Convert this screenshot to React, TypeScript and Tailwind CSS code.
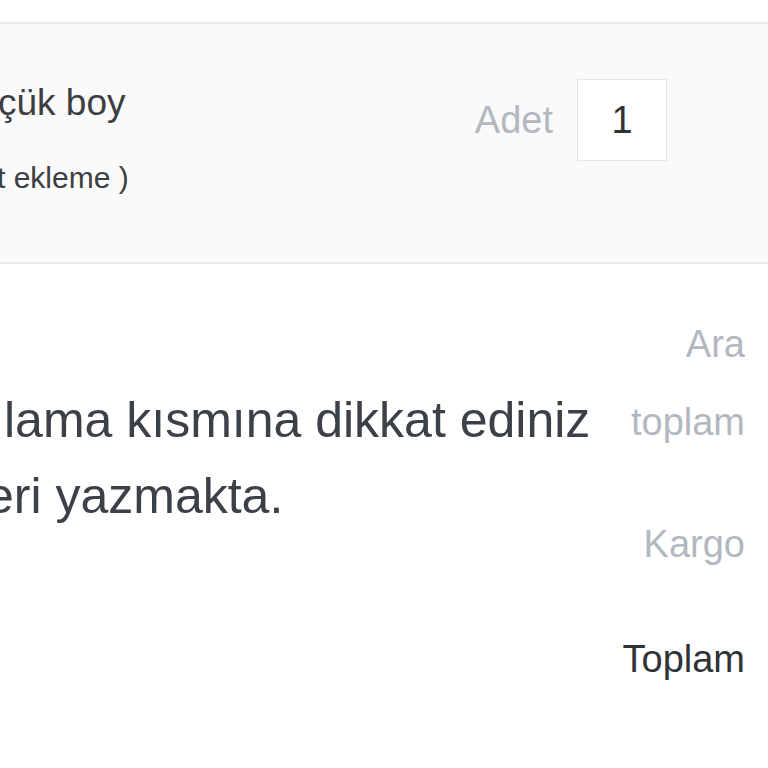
import React from 'react';

// Cart summary fragment: product row with quantity, note and totals

const CartFragment: React.FC = () => {
  return (
    <div className="w-[768px] h-[768px] overflow-hidden bg-white font-['Liberation_Sans']">
      {/* product row */}
      <div className="mt-[22px] h-[242px] border-y-2 border-[#ebebeb] bg-[#fafafa] flex justify-between items-start">
        <div className="pt-[60px]">
          <div className="ml-[-2px] text-[37px] leading-none text-[#3b3e42] whitespace-nowrap">çük boy</div>
          <div className="ml-[-3px] mt-[42px] text-[30px] leading-none text-[#3b3e42] whitespace-nowrap">t ekleme )</div>
        </div>
        <div className="mt-[55px] mr-[101px] flex items-center gap-[24px]">
          <span className="text-[38px] leading-none text-[#b3b8c0]">Adet</span>
          <div className="w-[90px] h-[82px] border border-[#e6e6e6] bg-white flex items-center justify-center">
            <span className="text-[38px] leading-none text-[#2f3236]">1</span>
          </div>
        </div>
      </div>

      {/* note + totals */}
      <div className="flex items-start">
        <div className="flex-1 mt-[118px] text-[50px] leading-[76px] text-[#3c4148] whitespace-nowrap">
          <div className="ml-[4px]">lama kısmına dikkat ediniz</div>
          <div className="ml-[-14px]">eri yazmakta.</div>
        </div>
        <div className="w-[160px] pr-[23px] pt-[41px] text-right text-[38px] leading-[78px]">
          <div className="text-[#b3b8c0]">
            Ara
            <br />
            toplam
          </div>
          <div className="mt-[44px] text-[#b3b8c0]">Kargo</div>
          <div className="mt-[37px] text-[#2f3337]">Toplam</div>
        </div>
      </div>
    </div>
  );
};

export default function App() {
  return <CartFragment />;
}
